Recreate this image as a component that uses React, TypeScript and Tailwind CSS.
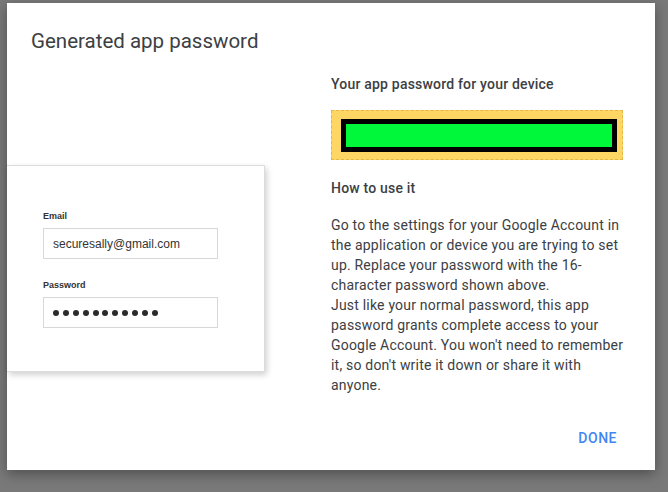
import React from "react";

function LoginCard() {
  return (
    <div className="w-[258px] h-[207px] bg-white border border-[#dcdcdc] border-l-0 shadow-[2px_3px_6px_rgba(0,0,0,0.18)] pl-9 pt-[44px] font-['Liberation_Sans',Arial,sans-serif] text-[#333]">
      <div className="text-[9px] font-bold leading-[12px]">Email</div>
      <div className="mt-[6px] w-[175px] h-[31px] border border-[#d8d8d8] flex items-center px-[9px] text-[12px] text-[#333]">
        securesally@gmail.com
      </div>
      <div className="mt-[20px] text-[9px] font-bold leading-[12px]">Password</div>
      <div className="mt-[6px] w-[175px] h-[31px] border border-[#d8d8d8] flex items-center px-[9px] gap-[3.9px]">
        {Array.from({ length: 11 }).map((_, i) => (
          <span key={i} className="w-[6px] h-[6px] rounded-full bg-[#2b2b2b]" />
        ))}
      </div>
    </div>
  );
}

export default function App() {
  return (
    <div className="w-[668px] h-[492px] bg-[#797979] overflow-hidden pt-[3px] pl-[7px] font-['Roboto',sans-serif]">
      <div className="w-[648px] h-[467px] bg-white shadow-[0_4px_12px_rgba(0,0,0,0.35)] flex flex-col">
        <h1 className="pt-6 pl-6 text-[20.5px] leading-[28px] text-[#3c4043] font-normal">
          Generated app password
        </h1>
        <div className="flex">
          <div className="w-[324px] shrink-0 pt-[110px]">
            <LoginCard />
          </div>
          <div className="w-[294px] pt-[19px] text-[#3c4043] tracking-[0.2px]">
            <div className="text-[14px] leading-[20px] font-medium">Your app password for your device</div>
            <div className="mt-4 w-[292px] h-[50px] bg-[#fdd663] border border-dashed border-[#e2b84c] pt-[8px] pl-[9px] pr-[5px]">
              <div className="h-[33px] w-[276px] border-[5px] border-black bg-[#00f83a]" />
            </div>
            <div className="mt-[18px] text-[14px] leading-[20px] font-medium">How to use it</div>
            <p className="mt-[17px] text-[14px] leading-[20px]">
              Go to the settings for your Google Account in the application or device you are trying to set up. Replace your password with the 16-character password shown above.
              <br />
              Just like your normal password, this app password grants complete access to your Google Account. You won't need to remember it, so don't write it down or share it with anyone.
            </p>
          </div>
        </div>
        <div className="flex justify-end pr-[38px] mt-[33px]">
          <button className="text-[14px] font-medium text-[#4285f4] tracking-[0.5px] leading-[20px]">DONE</button>
        </div>
      </div>
    </div>
  );
}
